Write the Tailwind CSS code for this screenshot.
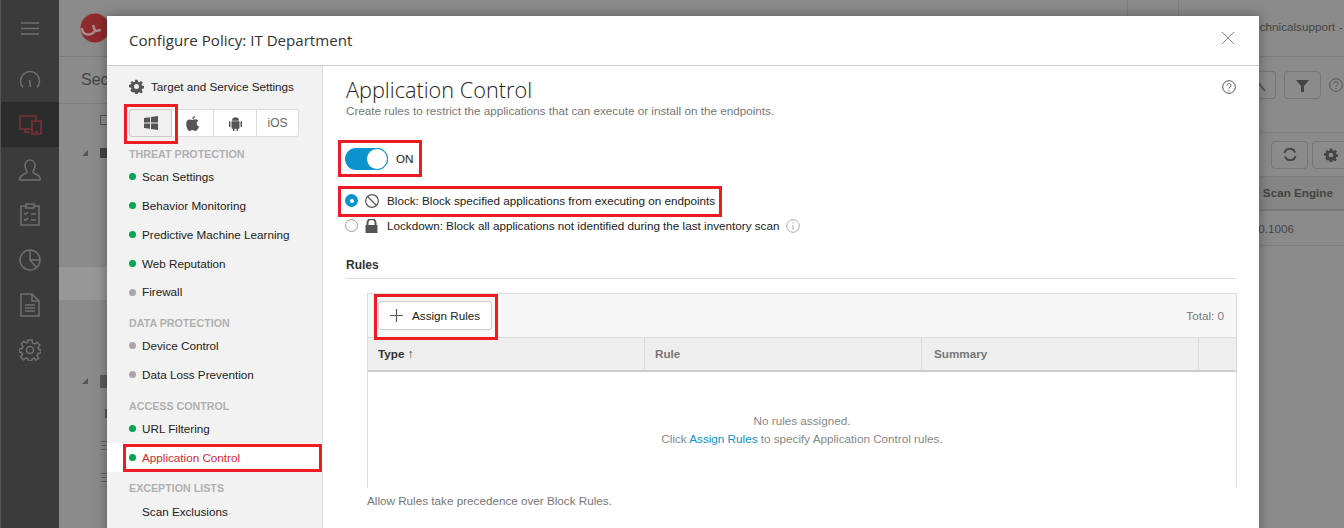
<!DOCTYPE html>
<html lang="en">
<head>
  <meta charset="UTF-8" />
  <title>Configure Policy</title>
  <script src="https://cdn.jsdelivr.net/npm/@tailwindcss/browser@4"></script>
</head>
<body class="relative w-[1344px] h-[528px] overflow-hidden bg-[#8b8b8b] font-['Liberation_Sans',sans-serif] text-[11.7px] text-[#222]">

  <!-- Page behind the dialog -->
  <div class="flex h-full">
    <nav class="w-[59px] shrink-0 bg-[#3b3b3b] border-l border-[#50565e] flex flex-col items-center text-[#707070]">
      <div class="h-[57px] flex items-center justify-center">
        <svg width="18" height="13" viewBox="0 0 18 13" stroke="currentColor" stroke-width="1.5"><path d="M0 1h18M0 6.5h18M0 12h18"/></svg>
      </div>
      <div class="h-[45px] w-full flex items-center justify-center">
        <svg width="22" height="18" viewBox="0 0 22 18" fill="none" stroke="currentColor" stroke-width="1.5"><path d="M4 16.5a9.5 9.5 0 1 1 14 0M11.500 16l-1-7"/></svg>
      </div>
      <div class="h-[45px] w-full flex items-center justify-center bg-[#2c2c2c] text-[#7e3036]">
        <svg width="23" height="20" viewBox="0 0 23 20" fill="none" stroke="currentColor" stroke-width="1.5"><path d="M12 14H1V1h16v5M6 14v3h5"/><rect x="13" y="6" width="9" height="13"/><path d="M16 17h3"/></svg>
      </div>
      <div class="h-[45px] w-full flex items-center justify-center">
        <svg width="22" height="22" viewBox="0 0 22 22" fill="none" stroke="currentColor" stroke-width="1.5"><path d="M11 1c3 0 5 2.5 5 5.5S14 12 14 13c0 1.500 7 3 7 6v2H1v-2c0-3 7-4.500 7-6 0-1-2-3.500-2-6.500S8 1 11 1z"/></svg>
      </div>
      <div class="h-[45px] w-full flex items-center justify-center">
        <svg width="20" height="23" viewBox="0 0 20 23" fill="none" stroke="currentColor" stroke-width="1.5"><path d="M6 3H1v19h18V3h-5M6 1h8v4H6zM4 10l1.500 1.500L8 9M11 11h5M4 16l1.500 1.500L8 15M11 17h5"/></svg>
      </div>
      <div class="h-[45px] w-full flex items-center justify-center">
        <svg width="22" height="22" viewBox="0 0 22 22" fill="none" stroke="currentColor" stroke-width="1.5"><circle cx="11" cy="11" r="10"/><path d="M11 1v10h10M11 11l6 7"/></svg>
      </div>
      <div class="h-[45px] w-full flex items-center justify-center">
        <svg width="20" height="24" viewBox="0 0 20 24" fill="none" stroke="currentColor" stroke-width="1.5"><path d="M1 1h11l7 7v15H1zM12 1v7h7M5 12h10M5 15h10M5 18h10"/></svg>
      </div>
      <div class="h-[45px] w-full flex items-center justify-center">
        <svg width="22" height="22" viewBox="0 0 22 22" fill="none" stroke="currentColor" stroke-width="1.5"><circle cx="11" cy="11" r="3.5"/><path d="M9 1h4l.5 3 2 1 2.500-1.700 2.800 2.800L19 8.500l1 2 2 .5v3l-3 .5-1 2 1.700 2.500-2.800 2.200L15 19l-2 1-.5 2h-3L9 19.500 7 19l-2.500 1.700-2.800-2.800L3.500 15.500l-1-2L0 13v-3l3-.5 1-2L2.300 5 5 2.300 7.500 4l1-.5z"/></svg>
      </div>
    </nav>

    <main class="flex-1 min-w-0 text-[#444]">
      <div class="h-[57px] border-b border-[#7d7d7d] flex pl-[21px]">
        <svg class="mt-[13px]" width="30" height="30" viewBox="0 0 30 30"><circle cx="15" cy="15" r="14.500" fill="#8f2a2c"/><path d="M2 15c0 7 8 9 13 3M15 18l-2-6M15 18l6-1" fill="none" stroke="#a98a8a" stroke-width="2.500"/></svg>
        <div class="ml-auto flex w-[217px] h-[16px]">
          <div class="w-[52px] h-full border-x border-[#7d7d7d]"></div>
        </div>
        <div class="-ml-[165px] w-[165px] shrink-0 flex justify-end pt-[18px] pr-[1px] gap-[4px]">
          <span class="whitespace-nowrap">technicalsupport</span>
          <span>-</span>
        </div>
      </div>

      <div class="flex">
        <!-- tree pane, mostly under the dialog -->
        <div class="w-[48px] shrink-0">
          <div class="h-[47px] pl-[22px] flex items-center border-b border-[#7d7d7d]"><span class="text-base whitespace-nowrap">Security</span></div>
          <div class="h-[32px] pl-[41px] flex items-center"><span class="w-[7px] h-[10px] border-l border-t border-b border-[#555]"></span></div>
          <div class="h-[34px] pl-[23px] flex items-center gap-[12px]">
            <span class="size-0 border-l-[6px] border-l-transparent border-b-[6px] border-b-[#555]"></span>
            <span class="w-[7px] h-[10px] bg-[#444]"></span>
          </div>
          <div class="h-[97px]"></div>
          <div class="h-[33px] bg-[#979797]"></div>
          <div class="h-[65px]"></div>
          <div class="h-[32px] pl-[23px] flex items-center gap-[12px]">
            <span class="size-0 border-l-[6px] border-l-transparent border-b-[6px] border-b-[#555]"></span>
            <span class="w-[7px] h-[13px] bg-[#5a5a5a]"></span>
          </div>
          <div class="h-[32px] pl-[46px] flex items-center"><span class="w-[2px] h-[9px] bg-[#555]"></span></div>
          <div class="h-[32px] pl-[42px] flex items-center"><span class="w-[6px] h-[9px] border-y border-[#666] flex items-center"><span class="w-full h-px bg-[#666]"></span></span></div>
          <div class="h-[32px] pl-[42px] flex items-center"><span class="w-[6px] h-[9px] border-y border-[#666] flex items-center"><span class="w-full h-px bg-[#666]"></span></span></div>
        </div>

        <!-- list pane -->
        <div class="flex-1 min-w-0">
          <div class="h-[76px] border-b border-[#7d7d7d] flex justify-end pt-[14px] gap-[8px]">
            <span class="w-[18px] h-[28px] border-y border-r border-[#777] rounded-r-sm overflow-hidden pt-[6px]">
              <svg width="8" height="15" viewBox="0 0 8 15" fill="none" stroke="#555" stroke-width="2"><path d="M0 5a4 4 0 0 0 1 .5L7 13"/></svg>
            </span>
            <span class="w-[37px] h-[28px] border border-[#777] rounded-sm flex items-center justify-center">
              <svg width="13" height="13" viewBox="0 0 13 13" fill="#444"><path d="M0 1h13L8 7v6H5V7z"/></svg>
            </span>
            <svg class="mt-[7px] mr-[1px]" width="14" height="14" viewBox="0 0 14 14" fill="none" stroke="#555"><circle cx="7" cy="7" r="6.300"/><path d="M5 5.500C5 3 9 3 9 5.500 9 7 7 7 7 8.500M7 10v1.200"/></svg>
          </div>
          <div class="h-[44px] border-b border-[#7d7d7d] flex justify-end items-center gap-[4px] -mr-[6px]">
            <span class="w-[37px] h-[28px] border border-[#777] rounded-sm flex items-center justify-center">
              <svg width="14" height="13" viewBox="0 0 14 13" fill="none" stroke="#444" stroke-width="2"><path d="M1.500 5A5.500 5.500 0 0 1 12 4.500M12.500 8A5.500 5.500 0 0 1 2 8.500"/></svg>
            </span>
            <span class="w-[38px] h-[28px] border border-[#777] rounded-sm flex items-center justify-center">
              <svg width="14" height="14" viewBox="0 0 24 24" fill="#444"><path d="M10 1h4l.6 3.200 2 .8L19.300 3l2.800 2.800-2 2.700.8 2 3.100.5v4l-3.100.6-.8 2 1.900 2.600-2.800 2.800-2.700-1.900-2 .8-.5 3.100h-4l-.5-3.100-2-.8L4.800 21 2 18.200l1.900-2.600-.8-2L0 13V9l3.100-.5.8-2L2 5.800 4.800 3l2.700 2 2-.8zM12 8a4 4 0 1 0 0 8 4 4 0 0 0 0-8z"/></svg>
            </span>
          </div>
          <div class="h-[34px] bg-[#858585] border-b-2 border-[#7a7a7a] flex items-center justify-end pr-[11px] font-bold">Scan Engine</div>
          <div class="h-[35px] border-b border-[#7d7d7d] flex items-center justify-end pr-[50px] pt-[2px]">0.1006</div>
        </div>
      </div>
    </main>
  </div>

  <!-- Dialog -->
  <div class="absolute left-[107px] top-[16px] w-[1152px] h-[530px] bg-white shadow-[0_0_12px_rgba(0,0,0,0.35)] flex flex-col">
    <header class="h-[50px] shrink-0 border-b border-[#ccc] flex items-center justify-between pl-[22px] pr-[23px]">
      <h1 class="font-['Open_Sans',sans-serif] text-[15.1px] text-[#333]">Configure Policy: IT Department</h1>
      <svg class="-mt-[5px] mr-[1px]" width="14" height="14" viewBox="0 0 14 14" stroke="#888" stroke-width="1"><path d="M1 1l12 12M13 1L1 13"/></svg>
    </header>

    <div class="flex flex-1 min-h-0">
      <!-- Left menu -->
      <aside class="w-[216px] shrink-0 bg-[#f2f2f2] border-r border-[#ddd]">
        <div class="flex items-center gap-[7px] pl-[22px] pt-[5px] h-[36px]">
          <svg width="15" height="15" viewBox="0 0 24 24" fill="#555"><path d="M10 1h4l.6 3.200 2 .8L19.300 3l2.800 2.800-2 2.700.8 2 3.100.5v4l-3.100.6-.8 2 1.900 2.600-2.800 2.800-2.700-1.900-2 .8-.5 3.100h-4l-.5-3.100-2-.8L4.800 21 2 18.200l1.900-2.600-.8-2L0 13V9l3.100-.5.8-2L2 5.800 4.800 3l2.700 2 2-.8zM12 8a4 4 0 1 0 0 8 4 4 0 0 0 0-8z"/></svg>
          <span>Target and Service Settings</span>
        </div>
        <div class="ml-[22px] mt-[7px] w-[170px] h-[28px] flex border border-[#ddd] rounded-[3px] bg-white text-[#666]">
          <div class="w-[43px] flex items-center justify-center bg-[#f0f0f0] border border-[#ccc] -m-px rounded-l-[3px]">
            <svg width="14" height="14" viewBox="0 0 14 14" fill="#555"><path d="M0 2l6-.8v5.300H0zM7 1l7-1v6.500H7zM0 7.500h6v5.300L0 12zM7 7.500h7V14l-7-1z"/></svg>
          </div>
          <div class="w-[43px] flex items-center justify-center border-r border-[#ddd]">
            <svg width="13" height="15" viewBox="0 0 13 15" fill="#555"><path d="M9 0c.1 1.500-1.200 3-2.700 3C6.200 1.500 7.500.2 9 0zM1 5c1.500-2 3.500-1.500 5-1s2.500-1.500 5-.2c.5.300 1 .7 1.200 1.200-2.300 1.300-2 4.500.8 5.500-.8 2.200-2 4.500-3.500 4.500-1.200 0-1.500-.7-3-.7s-1.800.7-3 .7C1.500 15-1 8 1 5z"/></svg>
          </div>
          <div class="w-[43px] flex items-center justify-center border-r border-[#ddd]">
            <svg width="13" height="15" viewBox="0 0 13 15" fill="#555"><path d="M3 4.700a3.500 3.500 0 0 1 7 0zM2.500 5.300h8v6.500c0 .6-.4 1-1 1H9V15H7.500v-2.200h-2V15H4v-2.200h-.5c-.6 0-1-.4-1-1zM.5 5.300c.5 0 1 .4 1 .9v4c0 .5-.5.9-1 .9S0 10.700 0 10.200v-4c0-.5 0-.9.5-.9zM12.500 5.300c.5 0 .5.400.5.900v4c0 .5 0 .9-.5.900s-1-.4-1-.9v-4c0-.5.500-.9 1-.9z"/></svg>
          </div>
          <div class="flex-1 flex items-center justify-center text-xs">iOS</div>
        </div>

        <h2 class="pl-[22px] mt-[10px] h-[15px] leading-[15px] text-[10.7px] font-bold text-[#b0b0b0]">THREAT PROTECTION</h2>
        <ul>
          <li class="h-[29px] pl-[22px] flex items-center gap-[6px]"><span class="size-[7px] rounded-full bg-[#00a651]"></span>Scan Settings</li>
          <li class="h-[29px] pl-[22px] flex items-center gap-[6px]"><span class="size-[7px] rounded-full bg-[#00a651]"></span>Behavior Monitoring</li>
          <li class="h-[29px] pl-[22px] flex items-center gap-[6px]"><span class="size-[7px] rounded-full bg-[#00a651]"></span>Predictive Machine Learning</li>
          <li class="h-[29px] pl-[22px] flex items-center gap-[6px]"><span class="size-[7px] rounded-full bg-[#00a651]"></span>Web Reputation</li>
          <li class="h-[28px] pl-[22px] flex items-center gap-[6px]"><span class="size-[7px] rounded-full bg-[#aaa6a6]"></span>Firewall</li>
        </ul>
        <h2 class="pl-[22px] mt-[10px] h-[15px] leading-[15px] text-[10.7px] font-bold text-[#b0b0b0]">DATA PROTECTION</h2>
        <ul>
          <li class="h-[29px] pl-[22px] flex items-center gap-[6px]"><span class="size-[7px] rounded-full bg-[#aaa6a6]"></span>Device Control</li>
          <li class="h-[29px] pl-[22px] flex items-center gap-[6px]"><span class="size-[7px] rounded-full bg-[#aaa6a6]"></span>Data Loss Prevention</li>
        </ul>
        <h2 class="pl-[22px] mt-[10px] h-[15px] leading-[15px] text-[10.7px] font-bold text-[#b0b0b0]">ACCESS CONTROL</h2>
        <ul>
          <li class="h-[29px] pl-[22px] flex items-center gap-[6px]"><span class="size-[7px] rounded-full bg-[#00a651]"></span>URL Filtering</li>
          <li class="h-[29px] pl-[22px] flex items-center gap-[6px] bg-white text-[#d7282f] -mr-px"><span class="size-[7px] rounded-full bg-[#00a651]"></span>Application Control</li>
        </ul>
        <h2 class="pl-[22px] mt-[9px] h-[15px] leading-[15px] text-[10.7px] font-bold text-[#b0b0b0]">EXCEPTION LISTS</h2>
        <ul class="mt-[1px]">
          <li class="h-[29px] pl-[35px] flex items-center">Scan Exclusions</li>
        </ul>
      </aside>

      <!-- Content -->
      <section class="flex-1 min-w-0 pl-[23px] pr-[23px]">
        <div class="flex justify-between pt-[10px]">
          <div>
            <h2 class="font-['Open_Sans',sans-serif] font-light text-[21.7px] leading-[27px] text-[#222]">Application Control</h2>
            <p class="text-[#777] leading-[14px] mt-[1px]">Create rules to restrict the applications that can execute or install on the endpoints.</p>
          </div>
          <svg class="mt-[4px]" width="14" height="14" viewBox="0 0 14 14" fill="none" stroke="#555"><circle cx="7" cy="7" r="6.300"/><path d="M5 5.500C5 3 9 3 9 5.500 9 7 7 7 7 8.500M7 10v1.200"/></svg>
        </div>

        <div class="flex items-center gap-[8px] mt-[29px] h-[24px] -ml-px">
          <span class="w-[43px] h-[22px] rounded-full bg-[#0a93cd] relative block">
            <span class="absolute right-0 top-0 size-[22px] rounded-full bg-white border border-[#0a93cd]"></span>
          </span>
          <span>ON</span>
        </div>

        <div class="flex items-center h-[25px] mt-[17px] -ml-px">
          <span class="size-[13px] rounded-full bg-[#0a93cd] flex items-center justify-center"><span class="size-[4px] rounded-full bg-white"></span></span>
          <svg class="ml-[7px]" width="14" height="14" viewBox="0 0 14 14" fill="none" stroke="#555" stroke-width="1.2"><circle cx="7" cy="7" r="6.300"/><path d="M2.500 2.500l9 9"/></svg>
          <span class="ml-[8px]">Block: Block specified applications from executing on endpoints</span>
        </div>
        <div class="flex items-center h-[25px] -ml-px">
          <span class="size-[13px] rounded-full bg-white border border-[#999]"></span>
          <svg class="ml-[7px]" width="13" height="14" viewBox="0 0 13 14" fill="#555"><path d="M1.500 6V4a5 5 0 0 1 10 0v2h1v8H.5V6zM3.500 6h6V4a3 3 0 0 0-6 0z"/></svg>
          <span class="ml-[9px]">Lockdown: Block all applications not identified during the last inventory scan</span>
          <svg class="ml-[7px]" width="14" height="14" viewBox="0 0 14 14" fill="none" stroke="#aaa"><circle cx="7" cy="7" r="6.300"/><path d="M7 6v5M7 3.500v1.200"/></svg>
        </div>

        <h3 class="font-bold text-xs mt-[19px] h-[21px] text-[#333]">Rules</h3>
        <div class="border-t border-[#ddd]"></div>

        <div class="ml-[21px] mt-[14px] w-[870px] h-[195px] border-x border-t border-[#ddd]">
          <div class="h-[43px] bg-[#f7f7f7] flex items-center justify-between pl-[10px] pr-[12px]">
            <button class="w-[114px] h-[29px] bg-white border border-[#ccc] rounded-[3px] flex items-center pl-[11px] gap-[9px]">
              <svg width="13" height="13" viewBox="0 0 13 13" stroke="#555" stroke-width="1.2"><path d="M6.500 0v13M0 6.500h13"/></svg>
              <span>Assign Rules</span>
            </button>
            <span class="text-[#777]">Total: 0</span>
          </div>
          <div class="h-[35px] grid grid-cols-[277px_277px_277px_1fr] bg-[#eee] border-y border-[#ddd] border-b-2 border-b-[#ccc] font-bold text-[#777]">
            <div class="pl-[10px] flex items-center gap-[3px] border-r border-[#ddd] text-[#333]">Type <span class="font-normal text-[12px]">↑</span></div>
            <div class="pl-[10px] flex items-center border-r border-[#ddd]">Rule</div>
            <div class="pl-[12px] flex items-center border-r border-[#ddd]">Summary</div>
            <div></div>
          </div>
          <div class="pt-[40px] text-center text-[#888] leading-[18px]">
            <p>No rules assigned.</p>
            <p>Click <a class="text-[#0a93cd]">Assign Rules</a> to specify Application Control rules.</p>
          </div>
        </div>
        <p class="ml-[21px] text-[#777] mt-[4px]">Allow Rules take precedence over Block Rules.</p>
      </section>
    </div>
  </div>

  <!-- Red annotation boxes -->
  <div class="absolute left-[124px] top-[104px] w-[54px] h-[40px] border-[3px] border-[#ed1c24]"></div>
  <div class="absolute left-[338px] top-[140px] w-[84px] h-[37px] border-[3px] border-[#ed1c24]"></div>
  <div class="absolute left-[338px] top-[186px] w-[384px] h-[31px] border-[3px] border-[#ed1c24]"></div>
  <div class="absolute left-[374px] top-[294px] w-[124px] h-[46px] border-[3px] border-[#ed1c24]"></div>
  <div class="absolute left-[123px] top-[444px] w-[199px] h-[28px] border-[3px] border-[#ed1c24]"></div>
</body>
</html>
